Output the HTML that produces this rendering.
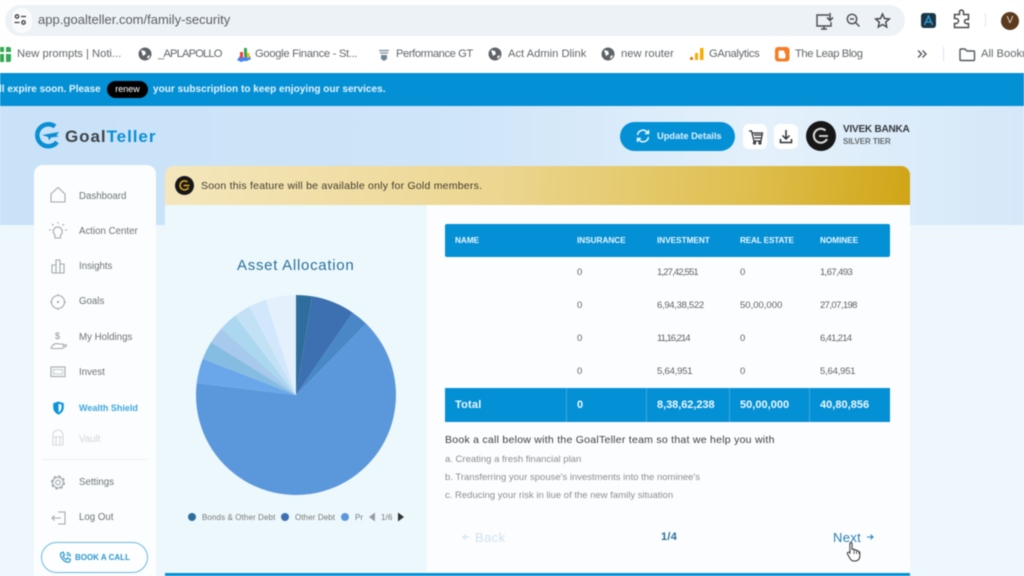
<!DOCTYPE html>
<html lang="en"><head><meta charset="utf-8"><title>GoalTeller</title>
<style>
*{box-sizing:border-box}
html,body{margin:0;padding:0;width:1024px;height:576px;overflow:hidden;background:#eef7fc;font-family:"Liberation Sans",sans-serif}
#r{position:relative;width:1024px;height:576px;overflow:hidden;filter:blur(.45px)}
.b{position:absolute}
.t{position:absolute;white-space:nowrap;height:14px;line-height:14px}
.bm{font-size:11.200px;color:#62666a}
.nav{font-size:9.700px;color:#6f7478}
.th{font-size:8.200px;font-weight:bold;color:#eaf6fd}
.td{font-size:9.500px;color:#606468}
.tt{font-size:11px;font-weight:bold;color:#eef8fe}
.li{font-size:9.500px;color:#8b8f93}
.lg{font-size:8px;color:#777;letter-spacing:.1px}
svg{position:absolute;overflow:visible}
</style></head><body><div id="r">
<!-- page backgrounds -->
<div class="b" style="left:0;top:106px;width:1024px;height:119px;background:linear-gradient(90deg,#c9e2f8 0%,#cfe5f9 45%,#e4f1fb 75%,#d5e8f9 100%)"></div>
<div class="b" style="left:0;top:225px;width:1024px;height:351px;background:#eef7fc"></div>

<!-- browser chrome -->
<div class="b" style="left:0;top:0;width:1024px;height:73px;background:#fff"></div>
<div class="b" style="left:5px;top:5px;width:900px;height:31px;border-radius:16px;background:#edf2f7"></div>
<div class="b" style="left:12px;top:8px;width:20px;height:25px;border-radius:12px;background:#fafbfc"></div>
<svg style="left:0;top:0" width="40" height="40" fill="none" stroke="#3c4043" stroke-width="1.3"><circle cx="17" cy="16.5" r="1.7"/><path d="M21 16.5h5M14.5 22.5h5"/><circle cx="23.5" cy="22.5" r="1.7"/></svg>
<div class="t" style="left:38px;top:13px;font-size:13px;color:#5b5f63">app.goalteller.com/family-security</div>
<!-- top right icons -->
<svg style="left:0;top:0" width="1024" height="40" fill="none" stroke="#4a4d50" stroke-width="1.4">
<path d="M829 15h-12v11h14v-4M821 29h6M824 26v3"/><path d="M830 13v7M827 17.500l3 3 3-3" stroke-width="1.5"/>
<circle cx="852" cy="19" r="4.700"/><path d="M855.500 22.500l4 4M850 19h4"/>
<path d="M882.500 14l2 4.500 4.800.5-3.600 3.200 1 4.800-4.200-2.500-4.200 2.500 1-4.800-3.600-3.200 4.800-.5z" stroke-width="1.500"/>
<path d="M955 15h5v-2.500a2 2 0 0 1 4 0V15h5v5h-2a2 2 0 0 0 0 4h2v4h-14v-4h1.500a2.500 2.500 0 0 0 0-5H955z" stroke-width="1.500" transform="translate(-.5 -.5)"/>
</svg>
<div class="b" style="left:921px;top:13px;width:15px;height:15px;border-radius:3px;background:#1c3544"></div>
<svg style="left:921px;top:13px" width="15" height="15" fill="none" stroke="#2ea3dc" stroke-width="1.300"><path d="M3.500 12L7.500 3l4 9M5 9h5"/></svg>
<div class="b" style="left:985px;top:13px;width:1px;height:14px;background:#dce8f3"></div>
<div class="b" style="left:1001px;top:12px;width:18px;height:18px;border-radius:50%;background:#5b3a1f;color:#e8dccf;font-size:10px;line-height:18px;text-align:center">V</div>

<!-- bookmarks -->
<div class="b" style="left:-1px;top:47px;width:12px;height:15px;border-radius:2px;background:#34a853"></div>
<div class="b" style="left:4px;top:47px;width:1.500px;height:15px;background:#fff"></div>
<div class="b" style="left:0;top:52px;width:11px;height:1.500px;background:#fff"></div>
<div class="t bm" style="left:17px;top:47px">New prompts | Noti...</div>
<svg style="left:0;top:0" width="1024" height="73">
<g fill="#5f6368"><circle cx="145" cy="54" r="6.500"/><circle cx="495" cy="54" r="6.500"/><circle cx="608" cy="54" r="6.500"/></g>
<g fill="#fff"><path d="M141 50l4 1 1 3-3 2zM147 57l2-2 1 1-2 3zM491 50l4 1 1 3-3 2zM497 57l2-2 1 1-2 3zM604 50l4 1 1 3-3 2zM610 57l2-2 1 1-2 3z"/></g>
<path d="M237 60l3-4 3 2 3-4 4 2 1 3-4 2-3 0-3 1z" fill="#4285f4"/><path d="M240 52h3v6h-3z" fill="#ea4335"/><path d="M244 48h3v8h-3z" fill="#34a853"/><path d="M247 53h2.500v5H247z" fill="#fbbc05"/>
<path d="M379 50.500h10M380 53h8" stroke="#7b8a94" stroke-width="1.300" fill="none"/><path d="M381 55h6v4l-3 2-3-2z" fill="#6f8794"/>
<rect x="690" y="57" width="3" height="3" rx="1" fill="#e37400"/><rect x="695" y="53" width="3" height="7" fill="#f9ab00"/><rect x="700" y="48" width="3.500" height="12" fill="#f9ab00"/>
<rect x="775" y="47" width="14.500" height="14.500" rx="3" fill="#f57d28"/><path d="M780 50.500h3a1.500 1.500 0 0 1 1.500 1.500v1.500h1V57a1.500 1.500 0 0 1-1.500 1.500h-4A1.500 1.500 0 0 1 778.500 57v-5a1.500 1.500 0 0 1 1.500-1.500z" fill="#fff"/>
<path d="M918 50.500l3.500 3.500-3.500 3.500M922.500 50.500l3.500 3.500-3.500 3.500" fill="none" stroke="#54585c" stroke-width="1.400"/>
<path d="M960 50a1 1 0 0 1 1-1h4l2 2h6.500a1 1 0 0 1 1 1v7.500a1 1 0 0 1-1 1H961a1 1 0 0 1-1-1z" fill="none" stroke="#54585c" stroke-width="1.400"/>
</svg>
<div class="b" style="left:943px;top:47px;width:1px;height:14px;background:#d5e6f4"></div>
<div class="t bm" style="left:158px;top:47px;letter-spacing:-.85px">_APLAPOLLO</div>
<div class="t bm" style="left:255px;top:47px;letter-spacing:-.3px">Google Finance - St...</div>
<div class="t bm" style="left:396px;top:47px;letter-spacing:-.42px">Performance GT</div>
<div class="t bm" style="left:508px;top:47px">Act Admin Dlink</div>
<div class="t bm" style="left:621px;top:47px">new router</div>
<div class="t bm" style="left:709px;top:47px;letter-spacing:-.3px">GAnalytics</div>
<div class="t bm" style="left:795px;top:47px;letter-spacing:-.4px">The Leap Blog</div>
<div class="t bm" style="left:981px;top:47px">All Bookmarks</div>

<!-- notice bar -->
<div class="b" style="left:0;top:73px;width:1024px;height:33px;background:#0490d5"></div>
<div class="t" style="left:-1px;top:82.500px;font-size:10px;font-weight:bold;color:#e3f3fc">ll expire soon. Please</div>
<div class="b" style="left:107px;top:81px;width:41px;height:17px;border-radius:9px;background:#000;color:#fff;font-size:9px;line-height:17px;text-align:center">renew</div>
<div class="t" style="left:153px;top:82.500px;font-size:10px;font-weight:bold;color:#e3f3fc;letter-spacing:.04px">your subscription to keep enjoying our services.</div>

<!-- logo -->
<svg style="left:33px;top:122px" width="30" height="28" fill="none"><path d="M22 4.500A11 11 0 1 0 24 20" stroke="#0a8fd4" stroke-width="4.500"/><path d="M9 13l17-3-2.500 3.500 2.500 1-8 1-2 3-1-3.500z" fill="#0a8fd4"/></svg>
<div class="t" style="left:65px;top:127.500px;font-size:17px;font-weight:bold;height:18px;line-height:18px;letter-spacing:.95px;color:#3c4347">Goal<span style="color:#0a8fd4">Teller</span></div>

<!-- top right controls -->
<div class="b" style="left:620px;top:122px;width:115px;height:29px;border-radius:15px;background:#0490d5"></div>
<svg style="left:636px;top:129px" width="14" height="14" fill="none" stroke="#e8f6fd" stroke-width="1.500"><path d="M1.500 6A5.500 5.500 0 0 1 11 3l1.500 1.500M12.500 8A5.500 5.500 0 0 1 3 11L1.500 9.500M12.500 1v3.500H9M1.500 13V9.500H5"/></svg>
<div class="t" style="left:657px;top:129px;font-size:9.300px;font-weight:bold;color:#dff2fc">Update Details</div>
<div class="b" style="left:743px;top:124px;width:24px;height:25px;border-radius:6px;background:#fff"></div>
<div class="b" style="left:774px;top:124px;width:24px;height:25px;border-radius:6px;background:#fff"></div>
<svg style="left:0;top:0" width="1024" height="200" fill="none" stroke="#2c2f33" stroke-width="1.200"><path d="M749 131h2.500l2.500 10h7l1.500-8h-10.500M754 135h7.500M754.500 138h6.500"/><circle cx="754.500" cy="143" r="1"/><circle cx="760" cy="143" r="1"/><path d="M786 130v9M782.500 135.500l3.500 3.500 3.500-3.500M780.500 139v3.500h11V139" stroke-width="1.500"/></svg>
<div class="b" style="left:806px;top:121px;width:30px;height:30px;border-radius:50%;background:#171717"></div>
<svg style="left:806px;top:121px" width="30" height="30" fill="none" stroke="#dcdcdc" stroke-width="2"><path d="M19.500 9.500A7 7 0 1 0 21 18"/><path d="M13 15h9" stroke-width="1.800"/></svg>
<div class="t" style="left:843px;top:123px;font-size:10px;font-weight:bold;color:#33373b;letter-spacing:-.22px">VIVEK BANKA</div>
<div class="t" style="left:843px;top:135px;font-size:8px;color:#666b70;font-weight:bold;letter-spacing:-.1px">SILVER TIER</div>

<!-- sidebar -->
<div class="b" style="left:34px;top:165px;width:122px;height:420px;border-radius:9px;background:#fbfdfe"></div>
<svg style="left:0;top:0" width="170" height="576" fill="none" stroke="#a4aaaf" stroke-width="1.100">
<path d="M51 202v-8l7-6.500 7 6.500v8z"/>
<path d="M55 235a4.500 4.500 0 1 1 5.500 0v3h-5.500zM51 230h-2M67 230h-2M52 224l1.500 1.500M64 224l-1.500 1.500M58 222v1.500" />
<path d="M52 273v-8h4v8M56 273v-13h4v13M60 273v-9h4v9zM52 273h12"/>
<circle cx="58" cy="302" r="6.500"/><path d="M58 294v2M58 308v2M50 302h2M64 302h2"/><circle cx="58" cy="302" r=".6" fill="#a4aaaf"/>
<path d="M51 348c2-4 5-5 8-4h3.500c1.200 0 1.200 1.600 0 1.800l3-1c1-.2 1.300.8.500 1.400l-4 2.300H52z"/>
<rect x="51" y="367" width="14" height="9.500"/><rect x="53.500" y="369.500" width="9" height="4.500" stroke-dasharray="1 .8"/>
<g opacity=".4"><path d="M53 445v-10a5 5 0 0 1 10 0v10zM53 437h10M56 437v8M60 437v8"/></g>
<circle cx="58" cy="482.500" r="2.300"/><circle cx="58" cy="482.500" r="5.300"/><circle cx="58" cy="482.500" r="6.200" stroke-width="1.800" stroke-dasharray="2.600 2.270"/>
<path d="M58 512h7v12h-7M52 518h9M54.500 515.500l-2.500 2.500 2.500 2.500"/>
</svg>
<div class="t" style="left:55px;top:329px;font-size:9px;color:#8f959a">$</div>
<svg style="left:52px;top:401px" width="13" height="14" viewBox="0 0 14 16"><path d="M7 .5l6 2v5c0 4-3 6.500-6 8-3-1.500-6-4-6-8v-5z" fill="#0b93d9"/><path d="M7 3l3.500 1.200v3.300c0 2.700-1.700 4.400-3.500 5.400z" fill="#e9f6fd"/></svg>
<div class="t nav" style="left:79px;top:189.500px">Dashboard</div>
<div class="t nav" style="left:79px;top:224.500px">Action Center</div>
<div class="t nav" style="left:79px;top:260px">Insights</div>
<div class="t nav" style="left:79px;top:295px">Goals</div>
<div class="t nav" style="left:79px;top:330.500px">My Holdings</div>
<div class="t nav" style="left:79px;top:365.500px">Invest</div>
<div class="t nav" style="left:79px;top:401px;color:#3ea7de;font-weight:bold;font-size:9px">Wealth Shield</div>
<div class="t nav" style="left:79px;top:433px;color:#d4d7da">Vault</div>
<div class="b" style="left:42px;top:459px;width:106px;height:1px;background:#edf0f2"></div>
<div class="t nav" style="left:79px;top:476px">Settings</div>
<div class="t nav" style="left:79px;top:511px">Log Out</div>
<div class="b" style="left:41px;top:542px;width:107px;height:31px;border-radius:16px;border:1px solid #72b9dc;background:#fcfeff"></div>
<svg style="left:59px;top:551px" width="13" height="13" fill="none" stroke="#1d8fc9" stroke-width="1.100"><path d="M1.500 2.500L4 1l1.500 3-1.500 1c.5 1.500 1.800 2.800 3.500 3.500l1-1.500 3 1.500-1 2.500c-4.500 1-9.500-4-9-8.500zM7.500 1.500a4 4 0 0 1 4 4M7.500 3.500a2 2 0 0 1 2 2"/></svg>
<div class="t" style="left:75px;top:551px;font-size:8px;font-weight:bold;color:#2c96cf">BOOK A CALL</div>

<!-- main card -->
<div class="b" style="left:165px;top:166px;width:745px;height:40px;border-radius:9px 9px 0 0;background:linear-gradient(95deg,#f5e7bd 0%,#ecd690 45%,#dfbf4f 78%,#d0a516 100%)"></div>
<div class="b" style="left:165px;top:205px;width:262px;height:371px;background:#edf8fd"></div>
<div class="b" style="left:427px;top:205px;width:483px;height:371px;background:#fbfdfe"></div>
<div class="b" style="left:165px;top:573px;width:745px;height:3px;background:#0490d5"></div>
<div class="b" style="left:175px;top:176px;width:19px;height:19px;border-radius:50%;background:#17171a"></div>
<svg style="left:175px;top:176px" width="19" height="19" fill="none" stroke="#e1a81c" stroke-width="1.500"><path d="M12.500 6A4.500 4.500 0 1 0 13.500 11.500M8.500 9.500h6"/></svg>
<div class="t" style="left:201px;top:178.500px;font-size:10.500px;color:#3f3b30;letter-spacing:.23px">Soon this feature will be available only for Gold members.</div>

<!-- chart -->
<div class="t" style="left:237px;top:257.500px;font-size:15px;height:16px;line-height:16px;color:#2a7099;letter-spacing:.72px">Asset Allocation</div>
<svg style="left:0;top:0" width="1024" height="576">
<path d="M296 395L296 295A100 100 0 0 1 312 296.300Z" fill="#2f6e9c"/>
<path d="M296 395L312 296.300A100 100 0 0 1 352.600 312.600Z" fill="#3c70b0"/>
<path d="M296 395L352.600 312.600A100 100 0 0 1 366.200 323.800Z" fill="#4a87c6"/>
<path d="M296 395L366.200 323.800A100 100 0 1 1 196.700 383Z" fill="#5b98db"/>
<path d="M296 395L196.700 383A100 100 0 0 1 202.800 358.700Z" fill="#6aa7ea"/>
<path d="M296 395L202.800 358.700A100 100 0 0 1 211 342.300Z" fill="#85bde2"/>
<path d="M296 395L211 342.300A100 100 0 0 1 221.300 328.500Z" fill="#a6c9ec"/>
<path d="M296 395L221.300 328.500A100 100 0 0 1 235 315.800Z" fill="#abd7f0"/>
<path d="M296 395L235 315.800A100 100 0 0 1 249.500 306.500Z" fill="#c3e1f5"/>
<path d="M296 395L249.500 306.500A100 100 0 0 1 265.900 299.600Z" fill="#d2e7fb"/>
<path d="M296 395L265.900 299.600A100 100 0 0 1 296 295Z" fill="#e4f1fd"/>
<circle cx="192" cy="517" r="4" fill="#2f6e9c"/><circle cx="285" cy="517" r="4" fill="#3c70b0"/><circle cx="345" cy="517" r="4" fill="#5b98db"/>
<path d="M369 517l6-4.500v9z" fill="#9a9da0"/><path d="M398 512.500l6 4.500-6 4.500z" fill="#333"/>
</svg>
<div class="t lg" style="left:202px;top:510.500px">Bonds &amp; Other Debt</div>
<div class="t lg" style="left:295px;top:510.500px">Other Debt</div>
<div class="t lg" style="left:355px;top:510.500px">Pr</div>
<div class="t lg" style="left:381px;top:510.500px">1/6</div>

<!-- table -->
<div class="b" style="left:445px;top:224px;width:445px;height:33px;border-radius:2px;background:#0490d5"></div>
<div class="t th" style="left:455px;top:233.500px">NAME</div>
<div class="t th" style="left:577px;top:233.500px">INSURANCE</div>
<div class="t th" style="left:657px;top:233.500px">INVESTMENT</div>
<div class="t th" style="left:740px;top:233.500px;letter-spacing:-.15px">REAL ESTATE</div>
<div class="t th" style="left:820px;top:233.500px">NOMINEE</div>

<div class="t td" style="left:577px;top:266px">0</div><div class="t td" style="left:657px;top:266px;letter-spacing:-.85px">1,27,42,551</div><div class="t td" style="left:740px;top:266px">0</div><div class="t td" style="left:820px;top:266px;letter-spacing:-.6px">1,67,493</div>
<div class="t td" style="left:577px;top:299px">0</div><div class="t td" style="left:657px;top:299px;letter-spacing:-.3px">6,94,38,522</div><div class="t td" style="left:740px;top:299px">50,00,000</div><div class="t td" style="left:820px;top:299px;letter-spacing:-.6px">27,07,198</div>
<div class="t td" style="left:577px;top:332px">0</div><div class="t td" style="left:657px;top:332px;letter-spacing:-1px">11,16,214</div><div class="t td" style="left:740px;top:332px">0</div><div class="t td" style="left:820px;top:332px;letter-spacing:-.7px">6,41,214</div>
<div class="t td" style="left:577px;top:365px">0</div><div class="t td" style="left:657px;top:365px;letter-spacing:-.2px">5,64,951</div><div class="t td" style="left:740px;top:365px">0</div><div class="t td" style="left:820px;top:365px;letter-spacing:-.2px">5,64,951</div>

<div class="b" style="left:445px;top:388px;width:445px;height:34px;background:#0490d5"></div>
<div class="b" style="left:566px;top:388px;width:1px;height:34px;background:#3fa9dd"></div>
<div class="b" style="left:646px;top:388px;width:1px;height:34px;background:#3fa9dd"></div>
<div class="b" style="left:729px;top:388px;width:1px;height:34px;background:#3fa9dd"></div>
<div class="b" style="left:809px;top:388px;width:1px;height:34px;background:#3fa9dd"></div>
<div class="t tt" style="left:455px;top:398px;letter-spacing:.2px">Total</div>
<div class="t tt" style="left:577px;top:398px">0</div>
<div class="t tt" style="left:657px;top:398px;letter-spacing:-.05px">8,38,62,238</div>
<div class="t tt" style="left:740px;top:398px;letter-spacing:.02px">50,00,000</div>
<div class="t tt" style="left:820px;top:398px;letter-spacing:.02px">40,80,856</div>

<div class="t" style="left:445px;top:433px;font-size:10.500px;color:#3c4044;letter-spacing:.26px">Book a call below with the GoalTeller team so that we help you with</div>
<div class="t li" style="left:445px;top:453px">a. Creating a fresh financial plan</div>
<div class="t li" style="left:445px;top:471px">b. Transferring your spouse's investments into the nominee's</div>
<div class="t li" style="left:445px;top:488.500px">c. Reducing your risk in liue of the new family situation</div>

<!-- pager -->
<svg style="left:0;top:0" width="1024" height="576" fill="none">
<path d="M469 537h-6M465.500 534.800l-2.500 2.200 2.500 2.200" stroke="#cfe3ef" stroke-width="1.100"/>
<path d="M867 537h6M870.500 534.800l2.500 2.200-2.500 2.200" stroke="#2a86bd" stroke-width="1.100"/>
</svg>
<div class="t" style="left:475px;top:530.500px;font-size:13px;color:#cfe3ef;letter-spacing:.4px">Back</div>
<div class="t" style="left:661px;top:529.500px;font-size:11px;font-weight:bold;color:#2a7099;letter-spacing:.3px">1/4</div>
<div class="t" style="left:833px;top:530.500px;font-size:13px;color:#2a7eb5;letter-spacing:.35px">Next</div>
<svg style="left:846px;top:541px" width="18" height="21"><path d="M4.500 1.500c1 0 1.600.7 1.600 1.700v5.300l1-.3c.7-.2 1.400.1 1.600.7.700-.3 1.500 0 1.800.7.700-.3 1.500 0 1.800.8.800-.1 1.500.5 1.500 1.300v3.500c0 2.800-2 4.800-4.800 4.800H8c-1.800 0-3-.9-3.800-2.300L1.500 13c-.5-.9 0-1.700.8-1.800.6-.1 1.200.2 1.600.7V3.200c0-.9-.1-1.700.6-1.700z" fill="#fff" stroke="#333" stroke-width="1"/><path d="M8 9v4M10.500 9.500V13M13 10v3" stroke="#333" stroke-width=".8"/></svg>
</div></body></html>
